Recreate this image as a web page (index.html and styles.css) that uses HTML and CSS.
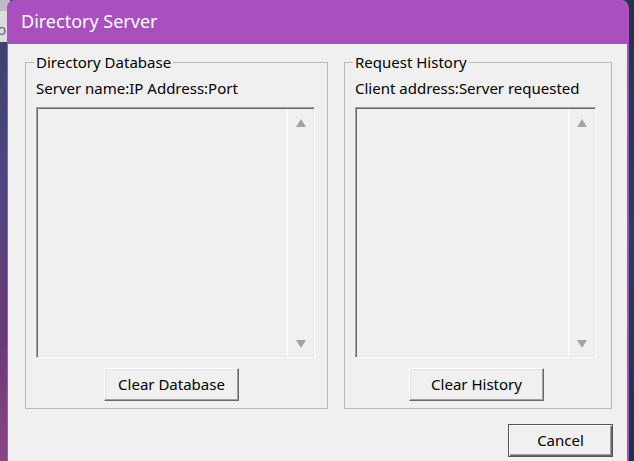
FILE: index.html
```html
<!DOCTYPE html>
<html>
<head>
<meta charset="utf-8">
<link rel="stylesheet" href="styles.css">
</head>
<body>
<div class="desktop">
  <div class="bgwin"><span class="bgwin-text">b</span></div>
  <div class="window">
    <div class="titlebar">Directory Server</div>
    <div class="client">
      <div class="groups">
        <fieldset class="group group-db">
          <legend class="group-title">Directory Database</legend>
          <div class="caption">Server name:IP Address:Port</div>
          <div class="listbox lb-db">
            <div class="list-area"></div>
            <div class="vscroll"><span class="arrow up"></span><span class="arrow down"></span></div>
          </div>
          <div class="btnrow btnrow-db"><button class="btn btn-wide">Clear Database</button></div>
        </fieldset>
        <fieldset class="group group-hist">
          <legend class="group-title">Request History</legend>
          <div class="caption">Client address:Server requested</div>
          <div class="listbox lb-hist">
            <div class="list-area"></div>
            <div class="vscroll"><span class="arrow up"></span><span class="arrow down"></span></div>
          </div>
          <div class="btnrow btnrow-hist"><button class="btn btn-wide">Clear History</button></div>
        </fieldset>
      </div>
      <div class="footer"><button class="btn btn-default">Cancel</button></div>
    </div>
  </div>
</div>
</body>
</html>
```

FILE: styles.css
```css
html, body {
  margin: 0;
  padding: 0;
}
body {
  width: 634px;
  height: 461px;
  overflow: hidden;
  font-family: "Noto Sans", "Open Sans", sans-serif;
}
.desktop {
  position: relative;
  width: 634px;
  height: 461px;
  overflow: hidden;
  background: linear-gradient(180deg, #3a3f6a 0%, #4e4680 40%, #6a3a78 75%, #8a4680 100%);
}
.desktop::after {
  content: "";
  position: absolute;
  right: 0;
  top: 0;
  width: 8px;
  height: 461px;
  background: linear-gradient(180deg, #1c3450 0%, #23405e 50%, #1d3248 100%);
}
.bgwin {
  position: absolute;
  left: 0;
  top: 0;
  width: 10px;
  height: 42px;
  background: #dcdcdc;
  border-top: 11px solid #bdbac4;
  box-sizing: border-box;
  overflow: hidden;
}
.bgwin-text {
  display: block;
  margin-left: -3px;
  margin-top: 10px;
  font-size: 15px;
  line-height: 16px;
  color: #666;
}
.window {
  position: absolute;
  left: 7px;
  top: 0;
  width: 622px;
  height: 470px;
  box-sizing: border-box;
  border: 1px solid #a94fbe;
  border-right-width: 2px;
  border-top: 0;
  border-radius: 8px 8px 0 0;
  background: #a94fbe;
  z-index: 2;
  display: flex;
  flex-direction: column;
}
.titlebar {
  height: 44px;
  flex: none;
  box-sizing: border-box;
  padding: 9px 0 0 13px;
  color: #ffffff;
  font-size: 18px;
  line-height: 24px;
}
.client {
  flex: 1;
  background: #f0f0f0;
  padding: 8px 0 0 17px;
  font-size: 15px;
  color: #000;
}
.groups {
  display: flex;
  gap: 16px;
}
.group {
  margin: 0;
  box-sizing: border-box;
  border: 1px solid #b9b9b9;
  padding: 0 0 7px 10px;
  height: 357px;
  display: flex;
  flex-direction: column;
}
.group-db { width: 303px; }
.group-hist { width: 268px; }
.group-title {
  margin-left: -2px;
  padding: 0 2px;
  line-height: 20px;
  font-size: 15px;
}
.caption {
  margin-top: 6px;
  line-height: 20px;
  height: 20px;
}
.listbox {
  margin-top: 9px;
  box-sizing: border-box;
  height: 251px;
  display: flex;
  background: #f0f0f0;
  border: 1px solid;
  border-color: #a0a0a0 #ffffff #ffffff #a0a0a0;
  box-shadow: inset 1px 1px 0 #696969, inset -1px -1px 0 #e3e3e3;
}
.lb-db { width: 279px; }
.lb-hist { width: 241px; }
.list-area {
  flex: 1;
}
.vscroll {
  width: 26px;
  flex: none;
  box-sizing: border-box;
  border-left: 1px solid #ffffff;
  margin: 1px 1px 1px 0;
  display: flex;
  flex-direction: column;
  justify-content: space-between;
  align-items: center;
  padding: 10px 0 8px 1px;
}
.arrow {
  width: 0;
  height: 0;
  border-left: 5.5px solid transparent;
  border-right: 5.5px solid transparent;
}
.arrow.up {
  border-bottom: 8px solid #a3a3a3;
}
.arrow.down {
  border-top: 8px solid #a3a3a3;
}
.btnrow {
  margin-top: 10px;
  display: flex;
}
.btnrow-db { padding-left: 68px; }
.btnrow-hist { padding-left: 54px; }
.btn {
  font-family: "Noto Sans", "Open Sans", sans-serif;
  font-size: 15px;
  color: #000;
  background: #f0f0f0;
  box-sizing: border-box;
  height: 33px;
  margin: 0;
  padding: 0 0 2px 0;
  border: 1px solid;
  border-color: #ffffff #696969 #696969 #ffffff;
  box-shadow: inset -1px -1px 0 #a0a0a0, inset 1px 1px 0 #e3e3e3;
}
.btn-wide { width: 135px; }
.footer {
  display: flex;
  justify-content: flex-end;
  padding: 15px 14px 0 0;
}
.btn-default {
  width: 105px;
  border: 1px solid #555555;
  box-shadow: inset 1px 1px 0 #ffffff, inset -1px -1px 0 #696969, inset -2px -2px 0 #a0a0a0;
}
```
